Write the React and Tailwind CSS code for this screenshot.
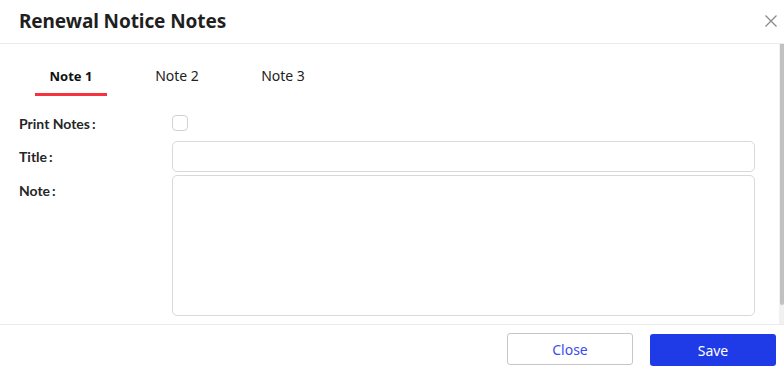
import React from "react";

const seg = { fontFamily: '"Noto Sans", "Open Sans", sans-serif' };
const lato = { fontFamily: 'Lato, "Noto Sans", sans-serif' };

function Label({ children, className = "" }) {
  return (
    <div className={"w-[153px] shrink-0 text-[14px] font-bold text-[#262626] " + className} style={lato}>
      {children}
      <span className="ml-[2px]">:</span>
    </div>
  );
}

export default function App() {
  const tabs = ["Note 1", "Note 2", "Note 3"];
  return (
    <div className="w-[784px] h-[376px] bg-white flex flex-col overflow-hidden">
      <div className="h-[44px] shrink-0 border-b border-[#ebebeb] flex items-center justify-between pl-[19px] pr-[7px]">
        <div className="text-[19px] font-bold text-[#1f1f1f] tracking-[-0.1px]" style={seg}>
          Renewal Notice Notes
        </div>
        <svg width="12" height="12" viewBox="0 0 12 12" className="mb-[2px]">
          <path d="M0.5 0.5 L11.5 11.5 M11.5 0.5 L0.5 11.5" stroke="#8a8a8a" strokeWidth="1.3" />
        </svg>
      </div>
      <div className="h-[280px] shrink-0 flex">
        <div className="flex-1 flex flex-col pl-[19px] pr-[24px]">
          <div className="flex gap-[34px] pl-[16px] mt-[20px]">
            {tabs.map((t, i) => (
              <div key={t} className="w-[72px] flex flex-col items-center">
                <div
                  className={
                    "leading-[24px] " +
                    (i === 0 ? "text-[13px] font-bold text-[#111]" : "text-[14px] text-[#222]")
                  }
                  style={seg}
                >
                  {t}
                </div>
                <div className={"mt-[5px] h-[3px] w-full " + (i === 0 ? "bg-[#f5333f]" : "bg-transparent")} />
              </div>
            ))}
          </div>
          <div className="flex items-center mt-[19px] h-[16px]">
            <Label>Print Notes</Label>
            <div className="w-[16px] h-[16px] rounded-[4px] border border-[#d2d2d2] bg-white" />
          </div>
          <div className="flex items-center mt-[10px]">
            <Label>Title</Label>
            <div className="flex-1 h-[31px] rounded-[5px] border border-[#d9d9d9] bg-white" />
          </div>
          <div className="flex items-start mt-[3px]">
            <Label className="pt-[6px] leading-[20px]">Note</Label>
            <div className="flex-1 h-[141px] rounded-[5px] border border-[#d9d9d9] bg-white" />
          </div>
        </div>
        <div className="w-[5px] flex flex-col bg-[#f1f1f1]">
          <div className="h-[261px] w-[4px] ml-[1px] bg-[#c1c1c1] rounded-b-[2px]" />
        </div>
      </div>
      <div className="flex-1 border-t border-[#ebebeb] flex justify-end items-start gap-[17px] pt-[8px] pr-[8px]">
        <button
          className="w-[126px] h-[32px] rounded-[3px] border border-[#c6c6c6] bg-white text-[14px] text-[#3b4cf0]"
          style={seg}
        >
          Close
        </button>
        <button
          className="w-[126px] h-[32px] mt-[1px] rounded-[3px] bg-[#1f3be8] text-[14px] text-white"
          style={seg}
        >
          Save
        </button>
      </div>
    </div>
  );
}
